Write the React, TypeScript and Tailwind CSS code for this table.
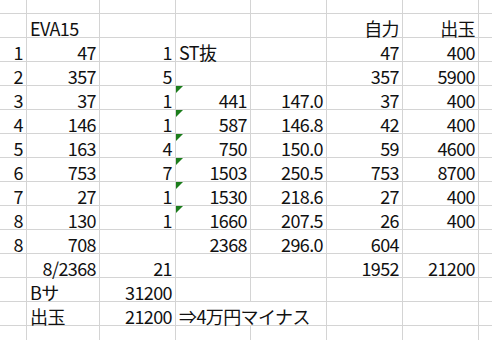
import React from "react";

// "<" prefix = left aligned, "^" prefix = green error marker, "=" prefix = span 2 cols
const rows: string[][] = [
  ["", "<EVA15", "", "", "", "自力", "出玉"],
  ["1", "47", "1", "<ST抜", "", "47", "400"],
  ["2", "357", "5", "", "", "357", "5900"],
  ["3", "37", "1", "^441", "147.0", "37", "400"],
  ["4", "146", "1", "^587", "146.8", "42", "400"],
  ["5", "163", "4", "^750", "150.0", "59", "4600"],
  ["6", "753", "7", "^1503", "250.5", "753", "8700"],
  ["7", "27", "1", "^1530", "218.6", "27", "400"],
  ["8", "130", "1", "^1660", "207.5", "26", "400"],
  ["8", "708", "", "2368", "296.0", "604", ""],
  ["", "8/2368", "21", "", "", "1952", "21200"],
  ["", "<Bサ", "31200", "", "", "", ""],
  ["", "<出玉", "21200", "=⇒4万円マイナス", "", ""],
];

const widths = ["w-[27px]", "w-[73px]", "w-[76px]", "w-[75px]", "w-[76px]", "w-[76px]", "w-[76px]"];

const Marker = () => (
  <svg className="absolute left-0 top-0" width="8" height="8" viewBox="0 0 8 8">
    <polygon points="0,0 7,0 0,7" fill="#1b7d1b" />
  </svg>
);

const Row = ({ cells }: { cells: string[] }) => {
  const out: React.ReactNode[] = [];
  let col = 0;
  cells.forEach((raw, i) => {
    let v = raw;
    let left = false;
    let tri = false;
    let span = false;
    if (v.startsWith("<")) { left = true; v = v.slice(1); }
    if (v.startsWith("^")) { tri = true; v = v.slice(1); }
    if (v.startsWith("=")) { span = true; left = true; v = v.slice(1); }
    const w = span ? "w-[151px]" : widths[col];
    col += span ? 2 : 1;
    out.push(
      <div
        key={i}
        className={`relative ${w} shrink-0 h-full border-r border-b border-[#d4d4d4] flex items-end whitespace-nowrap ${
          left ? "justify-start pl-[3px]" : "justify-end pr-[3px]"
        }`}
      >
        {tri && <Marker />}
        <span className="leading-[18px]">{v}</span>
      </div>
    );
  });
  return (
    <div className="flex h-[24px]">
      {out}
      <div className="flex-1 h-full border-b border-[#d4d4d4]" />
    </div>
  );
};

export default function App() {
  return (
    <div className="w-[492px] h-[340px] overflow-hidden bg-white text-[#111] text-[18px] tracking-[-0.6px] font-['Noto_Sans_CJK_JP','Noto_Sans',sans-serif]">
      <div className="flex h-[14px]">
        {widths.map((w, i) => (
          <div key={i} className={`${w} shrink-0 h-full border-r border-b border-[#d4d4d4]`} />
        ))}
        <div className="flex-1 h-full border-b border-[#d4d4d4]" />
      </div>
      {rows.map((r, i) => (
        <Row key={i} cells={r} />
      ))}
      <div className="flex h-[15px]">
        {widths.map((w, i) => (
          <div key={i} className={`${w} shrink-0 h-full border-r border-[#d4d4d4]`} />
        ))}
      </div>
    </div>
  );
}
